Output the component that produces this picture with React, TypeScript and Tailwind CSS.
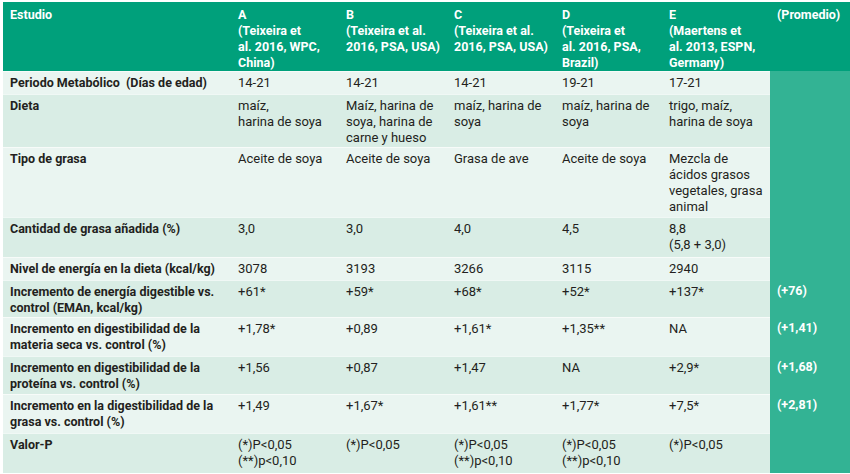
import React from "react";

type Row = {
	label: string;
	values: string[];
	avg?: string;
	h: string;
	dark: boolean;
};

const heads = [
	{ id: "A", ref: "(Teixeira et\nal. 2016, WPC,\nChina)" },
	{ id: "B", ref: "(Teixeira et al.\n2016, PSA, USA)" },
	{ id: "C", ref: "(Teixeira et al.\n2016, PSA, USA)" },
	{ id: "D", ref: "(Teixeira et\nal. 2016, PSA,\nBrazil)" },
	{ id: "E", ref: "(Maertens et\nal. 2013, ESPN,\nGermany)" },
];

const rows: Row[] = [
	{ label: "Periodo Metabólico\u00a0\u00a0(Días de edad)", values: ["14-21", "14-21", "14-21", "19-21", "17-21"], h: "h-[23px]", dark: false },
	{ label: "Dieta", values: ["maíz,\nharina de soya", "Maíz, harina de\nsoya, harina de\ncarne y hueso", "maíz, harina de\nsoya", "maíz, harina de\nsoya", "trigo, maíz,\nharina de soya"], h: "h-[53px]", dark: true },
	{ label: "Tipo de grasa", values: ["Aceite de soya", "Aceite de soya", "Grasa de ave", "Aceite de soya", "Mezcla de\nácidos grasos\nvegetales, grasa\nanimal"], h: "h-[70px]", dark: false },
	{ label: "Cantidad de grasa añadida (%)", values: ["3,0", "3,0", "4,0", "4,5", "8,8\n(5,8 + 3,0)"], h: "h-[40px]", dark: true },
	{ label: "Nivel de energía en la dieta (kcal/kg)", values: ["3078", "3193", "3266", "3115", "2940"], h: "h-[23px]", dark: false },
	{ label: "Incremento de energía digestible vs.\ncontrol (EMAn, kcal/kg)", values: ["+61*", "+59*", "+68*", "+52*", "+137*"], avg: "(+76)", h: "h-[37px]", dark: true },
	{ label: "Incremento en digestibilidad de la\nmateria seca vs. control (%)", values: ["+1,78*", "+0,89", "+1,61*", "+1,35**", "NA"], avg: "(+1,41)", h: "h-[39px]", dark: false },
	{ label: "Incremento en digestibilidad de la\nproteína vs. control (%)", values: ["+1,56", "+0,87", "+1,47", "NA", "+2,9*"], avg: "(+1,68)", h: "h-[38px]", dark: true },
	{ label: "Incremento en la digestibilidad de la\ngrasa vs. control (%)", values: ["+1,49", "+1,67*", "+1,61**", "+1,77*", "+7,5*"], avg: "(+2,81)", h: "h-[39px]", dark: false },
	{ label: "Valor-P", values: ["(*)P<0,05\n(**)p<0,10", "(*)P<0,05", "(*)P<0,05\n(**)p<0,10", "(*)P<0,05\n(**)p<0,10", "(*)P<0,05"], h: "h-[40px]", dark: true },
];

export default function App() {
	return (
		<div className="w-[850px] h-[474px] bg-white pl-[3px] pt-[2px] overflow-hidden font-['Roboto',sans-serif] text-[13px] leading-[16px] text-[#231f20]">
			<div className="grid grid-cols-[227px_108px_108px_108px_107px_109px_80px]">
				<div className="bg-[#00a07b] h-[69px] pl-[7px] pt-[5px] text-[12.5px] font-bold text-white">Estudio</div>
				{heads.map((h) => (
					<div key={h.id} className="bg-[#00a07b] h-[69px] pl-[8px] pt-[5px] text-[12.5px] font-bold text-white whitespace-pre">
						<div>{h.id}</div>
						<div>{h.ref}</div>
					</div>
				))}
				<div className="bg-[#00a07b] h-[69px] pl-[7px] pt-[5px] text-[12.5px] font-bold text-white">(Promedio)</div>

				{rows.map((r) => (
					<React.Fragment key={r.label}>
						<div className={`${r.h} ${r.dark ? "bg-[#d9ede5]" : "bg-[#eaf5f1]"} border-t border-white/60 pl-[7px] pt-[3px] text-[12.5px] font-bold whitespace-pre`}>
							{r.label}
						</div>
						{r.values.map((v, i) => (
							<div key={i} className={`${r.h} ${r.dark ? "bg-[#d9ede5]" : "bg-[#eaf5f1]"} border-t border-white/60 pl-[8px] pt-[3px] whitespace-pre`}>
								{v}
							</div>
						))}
						<div className={`${r.h} bg-[#33b394] pl-[7px] pt-[3px] text-[12.5px] font-bold text-white`}>{r.avg}</div>
					</React.Fragment>
				))}
			</div>
		</div>
	);
}
